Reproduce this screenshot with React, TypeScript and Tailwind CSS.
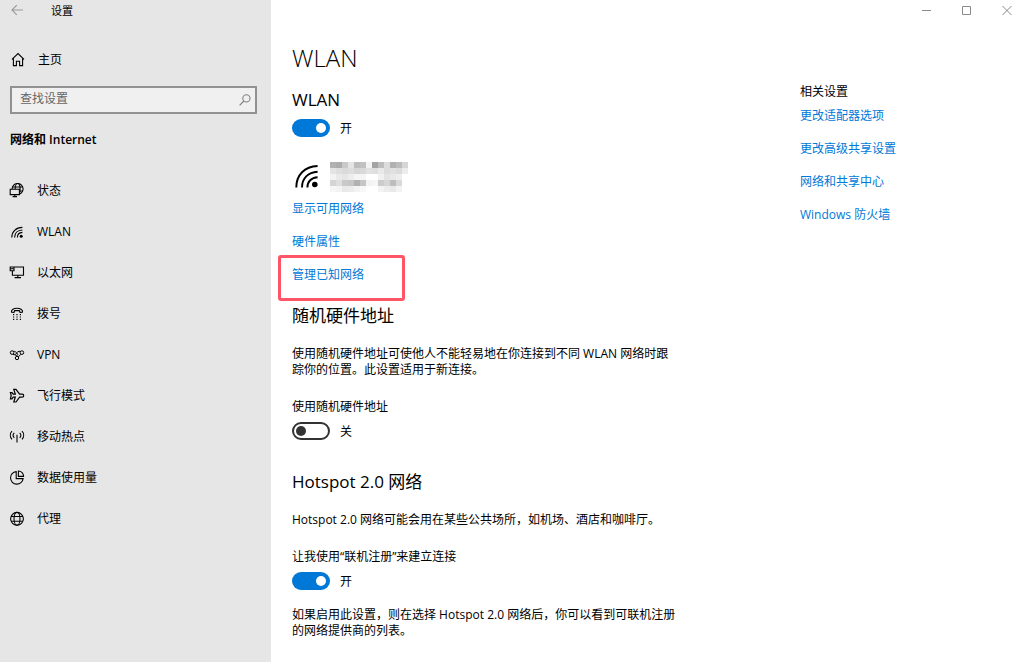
import React, { useState } from "react";

const sw = { fill: "none", stroke: "currentColor", strokeWidth: 1.1 } as const;

function Icon({ children }: { children: React.ReactNode }) {
  return (
    <svg viewBox="0 0 16 16" className="h-4 w-4 shrink-0" aria-hidden="true" {...sw}>
      {children}
    </svg>
  );
}

const icons = {
  home: (
    <Icon>
      <path d="M2 7.4 8 1.6l6 5.8M3.4 6.4v7.2h3V9.2h3.2v4.4h3V6.4" />
    </Icon>
  ),
  status: (
    <Icon>
      <circle cx="8.6" cy="6" r="5.5" />
      <ellipse cx="8.6" cy="6" rx="2.5" ry="5.5" />
      <path d="M3.6 4h10M3.6 8h10" />
      <path d="M1.2 6.2h9.2v5.4H1.2z" fill="#e6e6e6" />
      <path d="M5.8 11.6v2M3.6 13.6H8" />
    </Icon>
  ),
  wlan: (
    <Icon>
      <path d="M2.8 13.4c0-5.8 4-9.8 10.6-10M5.6 13.4c0-4.2 3-7.2 7.8-7.4M8.4 13.4c0-2.8 1.8-4.8 5-5" />
      <circle cx="12.2" cy="12.2" r="1.5" fill="currentColor" stroke="none" />
    </Icon>
  ),
  ethernet: (
    <Icon>
      <path d="M5 2h9.5v8.2H3.4V5.8M1.2 2H5v3.8H1.2zM1.8 3.8h2.6M8.9 10.2v2.4M5.6 12.6h6.4" />
    </Icon>
  ),
  dial: (
    <Icon>
      <path d="M2.6 6.2C1.6 4.2 4.6 2.2 8 2.2s6.4 2 5.4 4l-2.4.2-.7-1.8H5.7L5 6.4z" />
      <path d="M4 8.6h8.5M4 11h8.5M4 13.4h8.5" strokeDasharray="1.2 2.2" />
    </Icon>
  ),
  vpn: (
    <Icon>
      <g strokeWidth="1">
        <circle cx="3.1" cy="5.6" r="1.8" />
        <circle cx="12.9" cy="5.6" r="1.8" />
        <circle cx="8" cy="11" r="1.7" />
        <path d="M4.4 4.4c1.6-.4 3.2 1 4 2.4.8 1.2-.4 2.2-1.4 1.4L3.9 7.2M11.6 4.4c-2.2-.6-3.8 1-5.2 3.2M12 7.2 9.2 10" />
      </g>
    </Icon>
  ),
  plane: (
    <Icon>
      <path d="M4.8 1.4H7l3.6 4.8h2.6c2 0 2 3 0 3h-2.6L7 14H4.8l1.5-4.8H4.2L3 10.8H1.4l.8-3.1-.8-3.1H3l1.2 1.6h2.1z" strokeWidth="1.2" />
    </Icon>
  ),
  hotspot: (
    <Icon>
      <path d="M3 2.2C.8 4.6.8 8 3 10.4M5.3 3.8c-1.6 1.6-1.6 3.4 0 5M13 2.2c2.2 2.4 2.2 5.8 0 8.2M10.7 3.8c1.6 1.6 1.6 3.4 0 5M8 5.8v7.8" />
    </Icon>
  ),
  data: (
    <Icon>
      <path d="M7.2 1.6a6.3 6.3 0 1 0 6.9 7H7.2zM9.4 1v5.4h5.2C14.6 3.4 12.4 1 9.4 1z" />
    </Icon>
  ),
  proxy: (
    <Icon>
      <circle cx="8" cy="7.8" r="6.4" />
      <ellipse cx="8" cy="7.8" rx="3" ry="6.4" />
      <path d="M2 5.5h12M2 10.2h12" />
    </Icon>
  ),
};

const navItems = [
  { label: "状态", icon: icons.status },
  { label: "WLAN", icon: icons.wlan },
  { label: "以太网", icon: icons.ethernet },
  { label: "拨号", icon: icons.dial },
  { label: "VPN", icon: icons.vpn },
  { label: "飞行模式", icon: icons.plane },
  { label: "移动热点", icon: icons.hotspot },
  { label: "数据使用量", icon: icons.data },
  { label: "代理", icon: icons.proxy },
];

const related = ["更改适配器选项", "更改高级共享设置", "网络和共享中心", "Windows 防火墙"];

const mosaic = [
  "#b1b1b1 #acacac #c9c9c9 #e4e4e4 #bdbdbd #c1c1c1 #f3f3f3 #a3a3a3 #bdbdbd #dcdcdc #b1b1b1 #bdbdbd #d6d6d6",
  "#e4e4e4 #dedede #dadada #dedede #d6d6d6 #d9d9d9 #e2e2e2 #dfdfdf #e9e9e9 #dcdcdc #e1e1e1 #dcdcdc #ececec",
  "#f3f3f3 #e9e9e9 #e6e6e6 #ededed #f5f5f5 #f5f5f5 #ffffff #ffffff #f1f1f1 #e3e3e3 #e9e9e9 #ededed #ffffff",
  "#d4d4d4 #dedede #c9c9c9 #c6c6c6 #b1b1b1 #c6c6c6 #f3f3f3 #f6f6f6 #cccccc #d5d5d5 #bdbdbd #d9d9d9 #ffffff",
  "#f6f6f6 #f3f3f3 #e9e9e9 #ececec #f3f3f3 #f8f8f8 #ffffff #ffffff #f3f3f3 #ececec #e9e9e9 #f3f3f3 #ffffff",
].map((row) => row.split(" "));

function Toggle({ label, initial }: { label: string; initial: boolean }) {
  const [on, setOn] = useState(initial);
  return (
    <label className="flex h-5 w-fit items-center gap-2.5">
      <input
        type="checkbox"
        role="switch"
        aria-label={label}
        checked={on}
        onChange={(e) => setOn(e.target.checked)}
        className="peer sr-only"
      />
      <span
        className={
          on
            ? "flex h-[18px] w-[38px] items-center justify-end rounded-full bg-[#0078d7] px-1"
            : "flex h-[18px] w-[38px] items-center rounded-full border-2 border-[#333333] px-0.5"
        }
      >
        <span className={on ? "h-2.5 w-2.5 rounded-full bg-white" : "h-2.5 w-2.5 rounded-full bg-[#333333]"} />
      </span>
      <span className="pt-0.5">{on ? "开" : "关"}</span>
    </label>
  );
}

function TextLink({ children }: { children: React.ReactNode }) {
  return (
    <a href="#" className="block w-fit text-[#0078d7] hover:text-[#666666]">
      {children}
    </a>
  );
}

export default function App() {
  return (
    <div className="flex min-h-screen bg-white font-['Open_Sans','Noto_Sans_CJK_SC',sans-serif] text-[12px] leading-4 text-black">
      <aside className="w-[271px] shrink-0 bg-[#e6e6e6]">
        <header className="flex h-5 items-center gap-7 pl-[11px]">
          <button type="button" aria-label="返回" className="text-[#999999]">
            <svg viewBox="0 0 12 12" className="h-3 w-3" {...sw}>
              <path d="M12 6H1.2M5.8 1.2 1 6l4.8 4.8" />
            </svg>
          </button>
          <h1 className="pt-0.5 text-[11px]">设置</h1>
        </header>
        <a href="#" className="mt-7 flex h-6 items-center gap-3 pl-2.5">
          {icons.home}
          主页
        </a>
        <div className="mt-3.5 mr-3.5 ml-2.5 flex h-7 items-center border-2 border-[#919191] bg-[#f0f0f0] pr-1 pl-2">
          <input
            type="search"
            aria-label="查找设置"
            placeholder="查找设置"
            className="min-w-0 flex-1 bg-transparent pb-0.5 outline-none placeholder:text-[#666666]"
          />
          <svg viewBox="0 0 12 12" className="h-3 w-3 text-[#808080]" aria-hidden="true" {...sw}>
            <circle cx="7.4" cy="4.4" r="3.6" />
            <path d="M4.8 7 .6 11.4" />
          </svg>
        </div>
        <h2 className="mt-[18px] pl-2.5 font-semibold">网络和 Internet</h2>
        <nav className="mt-[22px]">
          <ul>
            {navItems.map((item) => (
              <li key={item.label}>
                <a href="#" className="flex h-[41px] items-center gap-3 pl-[9px]">
                  {item.icon}
                  {item.label}
                </a>
              </li>
            ))}
          </ul>
        </nav>
      </aside>

      <div className="flex min-w-0 flex-1 flex-col">
        <div className="flex h-5 items-center justify-end gap-7 pr-[11px] text-[#8a8a8a]">
          <button type="button" aria-label="最小化">
            <svg viewBox="0 0 12 12" className="h-3 w-3" fill="none" stroke="currentColor">
              <path d="M1 6.5h9" />
            </svg>
          </button>
          <button type="button" aria-label="最大化">
            <svg viewBox="0 0 12 12" className="h-3 w-3" fill="none" stroke="currentColor">
              <path d="M1.5 2.5h8v8h-8z" />
            </svg>
          </button>
          <button type="button" aria-label="关闭">
            <svg viewBox="0 0 12 12" className="h-3 w-3" fill="none" stroke="currentColor">
              <path d="m1.5 2 9 9M10.500 2l-9 9" />
            </svg>
          </button>
        </div>

        <div className="flex flex-1 justify-between pl-[21px]">
          <main className="w-[384px]">
            <h2 className="mt-5 text-[24px] leading-9 font-light">WLAN</h2>
            <h3 className="mt-3 text-[17px] leading-6">WLAN</h3>
            <div className="mt-1.5">
              <Toggle label="WLAN" initial />
            </div>

            <div className="mt-6 flex items-start gap-3">
              <svg viewBox="0 0 26 26" className="mt-px h-[26px] w-[26px]" fill="none" stroke="currentColor" strokeWidth="1.9" aria-hidden="true">
                <path d="M4.300 24.400C4.300 12 12.500 3.500 25.600 3M10 24.400C10 15.400 16 9.200 25.600 8.700M15.400 24.400c0-5.800 4-9.800 10.200-10.100" />
                <circle cx="22.8" cy="21.500" r="2.8" fill="currentColor" stroke="none" />
              </svg>
              <div className="grid grid-cols-13" aria-hidden="true">
                {mosaic.flatMap((row, y) =>
                  row.map((color, x) => <span key={`${y}-${x}`} className="h-1.5 w-1.5" style={{ background: color }} />),
                )}
              </div>
            </div>

            <div className="mt-[9px] space-y-[17px]">
              <TextLink>显示可用网络</TextLink>
              <TextLink>硬件属性</TextLink>
              <div className="relative">
                <TextLink>管理已知网络</TextLink>
                <span className="pointer-events-none absolute -top-3 -left-3.5 h-[46px] w-[127px] rounded-[3px] border-3 border-[#ff5566]" />
              </div>
            </div>

            <h3 className="mt-[21px] text-[17px] leading-6">随机硬件地址</h3>
            <p className="mt-[18px]">使用随机硬件地址可使他人不能轻易地在你连接到不同 WLAN 网络时跟踪你的位置。此设置适用于新连接。</p>
            <p className="mt-[21px]">使用随机硬件地址</p>
            <div className="mt-1.5">
              <Toggle label="使用随机硬件地址" initial={false} />
            </div>

            <h3 className="mt-[29px] text-[17px] leading-6">Hotspot 2.0 网络</h3>
            <p className="mt-[18px]">Hotspot 2.0 网络可能会用在某些公共场所，如机场、酒店和咖啡厅。</p>
            <p className="mt-[21px]">让我使用“联机注册”来建立连接</p>
            <div className="mt-1.5">
              <Toggle label="联机注册" initial />
            </div>
            <p className="mt-4">如果启用此设置，则在选择 Hotspot 2.0 网络后，你可以看到可联机注册的网络提供商的列表。</p>
          </main>

          <aside className="mt-16 w-[224px]">
            <h3>相关设置</h3>
            <div className="mt-2 space-y-[17px]">
              {related.map((text) => (
                <TextLink key={text}>{text}</TextLink>
              ))}
            </div>
          </aside>
        </div>
      </div>
    </div>
  );
}
